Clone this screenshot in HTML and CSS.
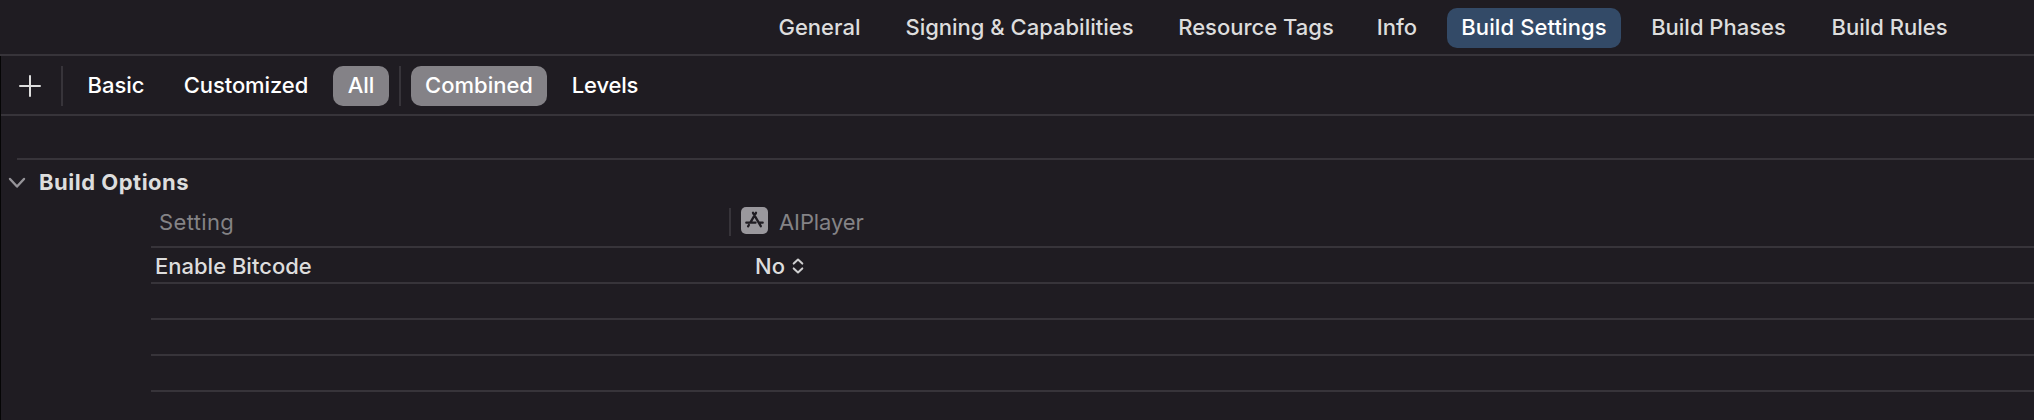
FILE: index.html
```html
<!DOCTYPE html>
<html lang="en">
<head>
<meta charset="utf-8">
<title>Build Settings</title>
<link rel="stylesheet" href="styles.css">
</head>
<body>
<nav class="tabs">
  <a class="tab general"><span>General</span></a>
  <a class="tab signing"><span>Signing &amp; Capabilities</span></a>
  <a class="tab resource"><span>Resource Tags</span></a>
  <a class="tab info"><span>Info</span></a>
  <a class="tab settings active"><span>Build Settings</span></a>
  <a class="tab phases"><span>Build Phases</span></a>
  <a class="tab rules"><span>Build Rules</span></a>
</nav>
<main class="editor">
  <div class="toolbar">
    <svg class="plus" width="22" height="22" viewBox="0 0 22 22"><path d="M11 1v20M1 11h20"/></svg>
    <i class="divider"></i>
    <a class="filter basic">Basic</a>
    <a class="filter customized">Customized</a>
    <a class="filter all selected">All</a>
    <i class="divider second"></i>
    <a class="filter combined selected">Combined</a>
    <a class="filter levels">Levels</a>
  </div>
  <section class="group">
    <h2 class="title">
      <svg class="chevron" width="18" height="12" viewBox="0 0 18 12"><path d="M2 2l7 7.5L16 2"/></svg>
      <span>Build Options</span>
    </h2>
    <div class="table">
      <div class="row head">
        <span class="name">Setting</span>
        <div class="target">
          <svg class="app" width="27" height="27" viewBox="0 0 27 27">
            <rect width="27" height="27" rx="5"/>
            <path d="M12 5.8l7.8 13.4M15 5.8L9.3 15.6M5.3 15.7h9.2M18.4 15.7h3.3M7.9 18l-.8 1.3"/>
          </svg>
          <span class="app-name">AIPlayer</span>
        </div>
      </div>
      <div class="row">
        <span class="name">Enable Bitcode</span>
        <div class="value"><span>No</span>
          <svg class="stepper" width="12" height="16" viewBox="0 0 12 16"><path d="M1.7 5.6L6 1.6l4.3 4M1.7 10.4l4.3 4 4.3-4"/></svg>
        </div>
      </div>
      <div class="row"></div>
      <div class="row"></div>
      <div class="row"></div>
    </div>
  </section>
</main>
</body>
</html>
```
FILE: styles.css
```css
* { box-sizing: border-box; }
body {
  margin: 0;
  height: 420px;
  overflow: hidden;
  background: #1f1c22;
  color: #dddddd;
  font: 500 22px/38px Inter, "Liberation Sans", sans-serif;
  white-space: nowrap;
}
svg { display: block; flex: none; fill: none; stroke-linecap: round; stroke-linejoin: round; }
.tabs {
  display: flex;
  justify-content: flex-end;
  gap: 17px;
  height: 56px;
  padding: 8px 72px 0 0;
  border-bottom: 2px solid #37343a;
}
.tab, .filter {
  display: flex;
  justify-content: center;
  flex: none;
  height: 40px;
  border-radius: 10px;
}
.general { width: 109px; }
.signing { width: 257px; }
.resource { width: 181px; padding-left: 1px; }
.info { width: 67px; padding-left: 1px; }
.settings { width: 174px; letter-spacing: 0.1px; }
.phases { width: 161px; }
.rules { width: 146px; padding-left: 1px; }
.active { background: #334a67; color: #fff; }
.editor { height: 364px; border-left: 1px solid #050505; }
.toolbar {
  display: flex;
  height: 60px;
  padding: 10px 0 0 18px;
  border-bottom: 2px solid #37343a;
  color: #fff;
}
.plus { margin-top: 9px; stroke: #dedede; stroke-width: 2; }
.divider { width: 2px; height: 40px; margin-left: 20px; background: #37343a; }
.basic { width: 84px; margin-left: 11px; }
.customized { width: 152px; margin-left: 12px; letter-spacing: -0.1px; }
.all { width: 56px; margin-left: 11px; }
.second { margin-left: 10px; }
.combined { width: 136px; margin-left: 10px; }
.levels { width: 92px; margin-left: 12px; letter-spacing: -0.2px; }
.selected { background: #848287; }
.group { margin: 42px 0 0 16px; border-top: 2px solid #37343a; }
.title {
  display: flex;
  align-items: center;
  gap: 13px;
  height: 43px;
  margin: 0 0 0 -9px;
  font-size: 22px;
  font-weight: 700;
  letter-spacing: 0.5px;
}
.chevron { margin-top: 3px; stroke: #969499; stroke-width: 2.4; }
.table { margin-left: 134px; }
.row {
  display: flex;
  height: 36px;
  border-bottom: 2px solid #37343a;
  line-height: 36px;
}
.name { width: 578px; padding-left: 4px; }
.head { height: 45px; color: #848386; font-weight: 400; }
.head .name { padding: 1px 0 0 8px; letter-spacing: 0.35px; }
.target {
  display: flex;
  height: 28px;
  margin-top: 5px;
  padding-left: 10px;
  border-left: 2px solid #37343a;
  line-height: 28px;
}
.app { margin-top: -1px; stroke: #1f1c22; stroke-width: 2.3; }
.app rect { fill: #9a989d; stroke: none; }
.app-name { margin-left: 11px; letter-spacing: -0.1px; }
.value { display: flex; padding-left: 26px; }
.stepper { margin: 10px 0 0 7px; stroke: #cfcfd0; stroke-width: 2; }
```
